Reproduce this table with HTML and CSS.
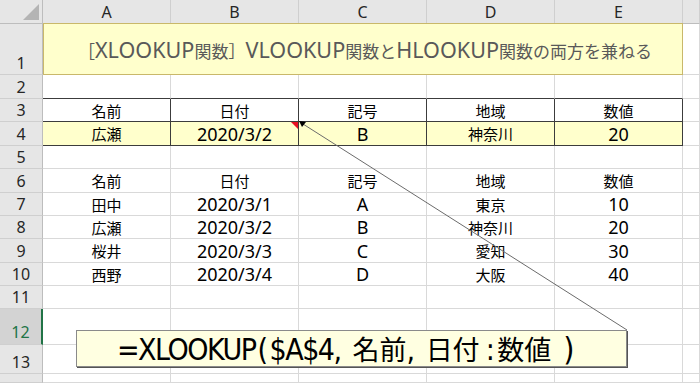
FILE: index.html
```html
<!DOCTYPE html>
<html lang="ja">
<head>
<meta charset="utf-8">
<link rel="stylesheet" href="styles.css">
</head>
<body>
<div class="sheet">
  <div class="corner"><span class="tri"></span></div>
  <div class="ch">A</div><div class="ch">B</div><div class="ch">C</div><div class="ch">D</div><div class="ch">E</div><div class="ch"></div>

  <div class="rh">1</div>
  <div class="title">［<span class="lt">XLOOKUP</span>関数］ <span class="lt">VLOOKUP</span>関数と<span class="lt">HLOOKUP</span>関数の両方を兼ねる</div>
  <div class="c"></div>

  <div class="rh">2</div>
  <div class="c tb"></div><div class="c tb"></div><div class="c tb"></div><div class="c tb"></div><div class="c tb"></div><div class="c"></div>

  <div class="rh">3</div>
  <div class="c t">名前</div><div class="c t">日付</div><div class="c t">記号</div><div class="c t">地域</div><div class="c t">数値</div><div class="c"></div>

  <div class="rh">4</div>
  <div class="c t y">広瀬</div><div class="c t y n note">2020/3/2<span class="mark"></span></div><div class="c t y n">B</div><div class="c t y">神奈川</div><div class="c t y n">20</div><div class="c"></div>

  <div class="rh">5</div>
  <div class="c"></div><div class="c"></div><div class="c"></div><div class="c"></div><div class="c"></div><div class="c"></div>

  <div class="rh">6</div>
  <div class="c">名前</div><div class="c">日付</div><div class="c">記号</div><div class="c">地域</div><div class="c">数値</div><div class="c"></div>

  <div class="rh">7</div>
  <div class="c">田中</div><div class="c n">2020/3/1</div><div class="c n">A</div><div class="c">東京</div><div class="c n">10</div><div class="c"></div>

  <div class="rh">8</div>
  <div class="c">広瀬</div><div class="c n">2020/3/2</div><div class="c n">B</div><div class="c">神奈川</div><div class="c n">20</div><div class="c"></div>

  <div class="rh">9</div>
  <div class="c">桜井</div><div class="c n">2020/3/3</div><div class="c n">C</div><div class="c">愛知</div><div class="c n">30</div><div class="c"></div>

  <div class="rh">10</div>
  <div class="c">西野</div><div class="c n">2020/3/4</div><div class="c n">D</div><div class="c">大阪</div><div class="c n">40</div><div class="c"></div>

  <div class="rh">11</div>
  <div class="c"></div><div class="c"></div><div class="c"></div><div class="c"></div><div class="c"></div><div class="c"></div>

  <div class="rh sel">12</div>
  <div class="c"></div><div class="c"></div><div class="c"></div><div class="c"></div><div class="c"></div><div class="c"></div>

  <div class="rh">13</div>
  <div class="c"></div><div class="c"></div><div class="c"></div><div class="c"></div><div class="c"></div><div class="c"></div>

  <div class="rh"></div>
  <div class="c"></div><div class="c"></div><div class="c"></div><div class="c"></div><div class="c"></div><div class="c"></div>

  <svg class="arrow" width="700" height="383" viewBox="0 0 700 383">
    <line x1="627" y1="330" x2="303" y2="124" stroke="#6b6b6b" stroke-width="1"/>
    <polygon points="299,121 306,122 302,127" fill="#000"/>
  </svg>
  <div class="callout"><span class="fl">=XLOOKUP</span><span class="fl po">(</span><span class="fl">$A$4,</span><span class="sp"></span>名前<span class="fl">,</span><span class="sp"></span>日付<span class="fl co">:</span>数値<span class="fl pc">)</span></div>
</div>
</body>
</html>
```

FILE: styles.css
```css
html, body {
  margin: 0;
  padding: 0;
  background: #fff;
  overflow: hidden;
}

.sheet {
  position: relative;
  width: 700px;
  height: 383px;
  display: grid;
  grid-template-columns: 43px repeat(5, 128px) 1fr;
  grid-template-rows: 24px 51px 24px 23px 24px 23px 24px 23px 23px 24px 23px 23px 36px 29px 1fr;
  font-family: "Noto Sans CJK JP", "Noto Sans", sans-serif;
  font-size: 15px;
  color: #000;
}

.sheet > div {
  box-sizing: border-box;
  border-right: 1px solid #d9d9d9;
  border-bottom: 1px solid #d9d9d9;
  display: flex;
  align-items: center;
  justify-content: center;
  line-height: 1;
  min-width: 0;
  overflow: visible;
  white-space: nowrap;
}

.corner {
  position: relative;
  background: #e6e6e6;
  border-right-color: #bdbdbd !important;
  border-bottom-color: #bdbdbd !important;
}

.corner .tri {
  position: absolute;
  right: 3px;
  bottom: 3px;
  width: 0;
  height: 0;
  border-left: 16px solid transparent;
  border-bottom: 16px solid #b4b4b4;
}

.sheet > .ch {
  background: #e6e6e6;
  border-right-color: #cfcfcf;
  border-bottom-color: #bdbdbd;
  font-family: "Noto Sans", sans-serif;
  font-size: 16px;
  color: #262626;
  padding-top: 1px;
}

.sheet > .rh {
  background: #e6e6e6;
  border-right-color: #bdbdbd;
  border-bottom-color: #cfcfcf;
  align-items: flex-end;
  padding-bottom: 3px;
  font-family: "Noto Sans", sans-serif;
  font-size: 16px;
  color: #262626;
}

.sheet > .rh.sel {
  background: #d3d3d3;
  color: #217346;
  border-right: 2px solid #217346;
  padding-bottom: 4px;
}

.sheet > .title {
  grid-column: 2 / 7;
  background: #ffffcc;
  border: 1px solid #c9b86a;
  margin-top: -1px;
  font-size: 17px;
  color: #595959;
  padding-top: 2px;
  padding-left: 4px;
}

.title .lt {
  font-family: "Noto Sans", sans-serif;
  font-size: 21.6px;
}

.sheet > .tb {
  border-bottom-color: #3c3c3c;
}

.sheet > .t {
  border-right-color: #3c3c3c;
  border-bottom-color: #3c3c3c;
}

.sheet > .y {
  background: #ffffcc;
}

.sheet > .n {
  font-family: "Noto Sans", sans-serif;
  font-size: 18px;
}

.sheet > .note {
  position: relative;
}

.mark {
  position: absolute;
  top: 0;
  right: 0;
  width: 0;
  height: 0;
  border-left: 7px solid transparent;
  border-top: 7px solid #e81123;
}

.arrow {
  position: absolute;
  left: 0;
  top: 0;
  pointer-events: none;
}

.sheet > .callout {
  position: absolute;
  left: 76px;
  top: 330px;
  width: 551px;
  height: 37px;
  box-sizing: border-box;
  display: block;
  background: #ffffe1;
  border: 1px solid #8a8a8a;
  box-shadow: 1px 1px 0 #555;
  font-family: "Noto Sans CJK JP", sans-serif;
  font-size: 27px;
  line-height: 35px;
  padding-left: 40px;
  color: #000;
  white-space: nowrap;
}

.callout .fl {
  font-family: "DejaVu Sans Condensed", "Liberation Sans Narrow", "DejaVu Sans", sans-serif;
  font-stretch: condensed;
  font-size: 30px;
  letter-spacing: -1.5px;
}

.callout .po {
  margin: 0 3px 0 2px;
}

.callout .co {
  margin: 0 4px 0 6px;
}

.callout .sp {
  display: inline-block;
  width: 12px;
}

.callout .pc {
  font-size: 32px;
  margin-left: 12px;
}
```
